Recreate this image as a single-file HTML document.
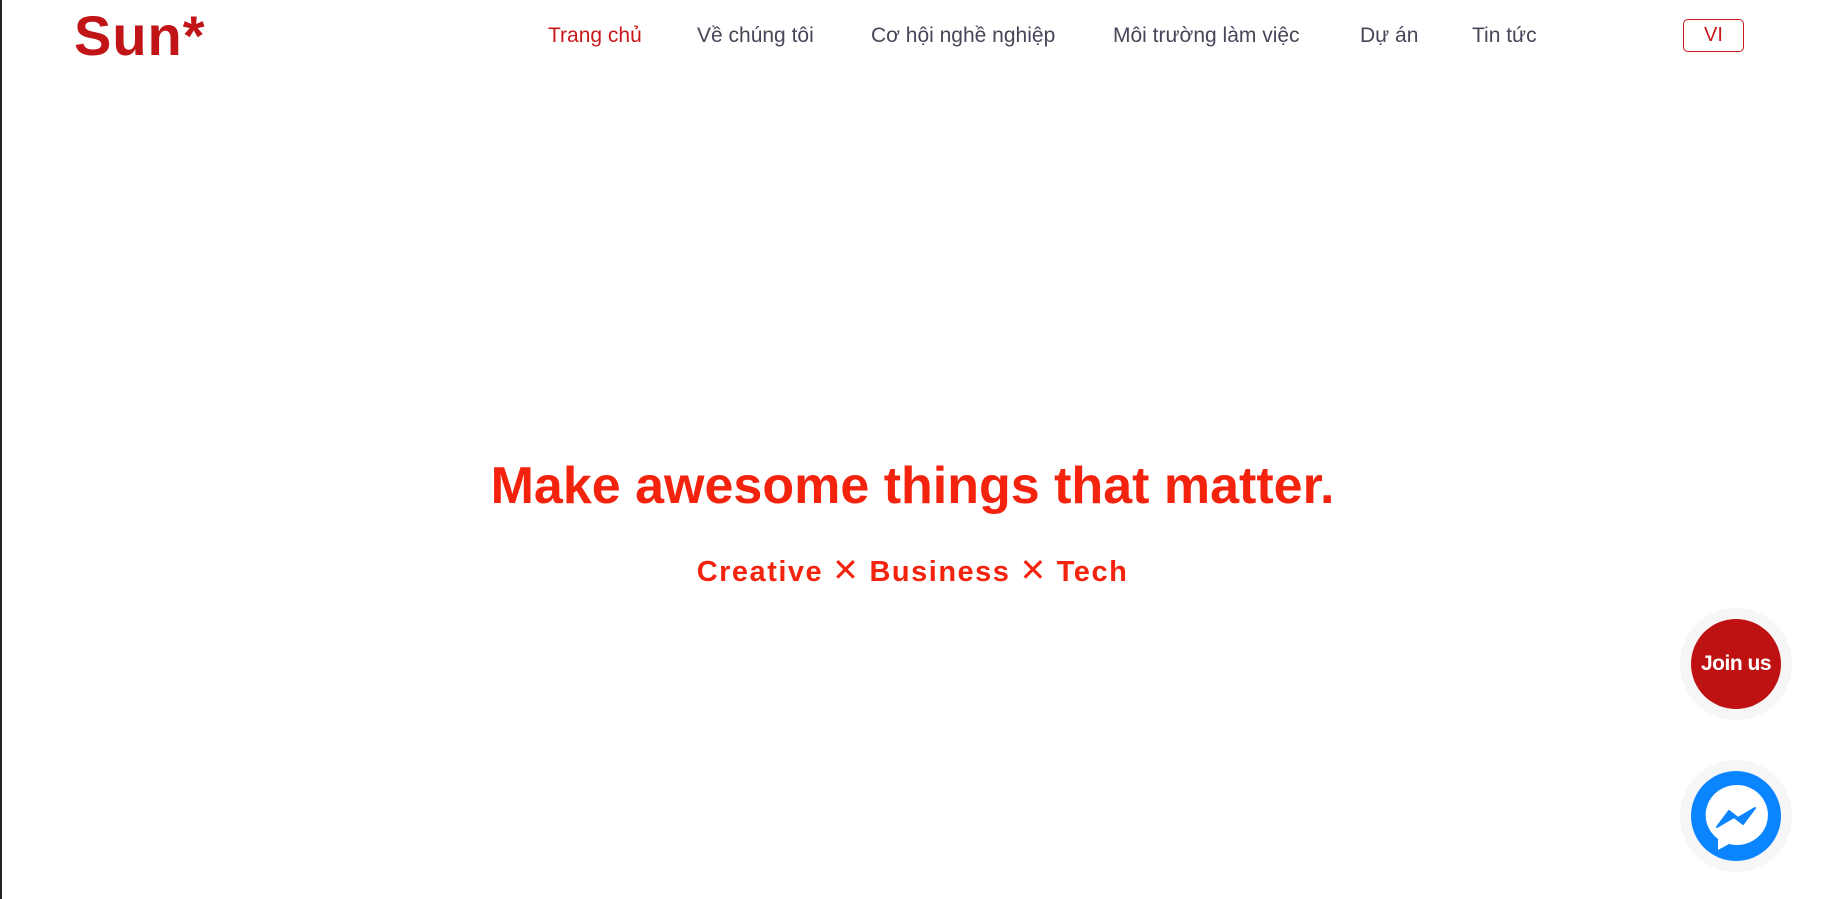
<!DOCTYPE html>
<html><head><meta charset="utf-8"><style>
html,body{margin:0;padding:0;width:1831px;height:899px;overflow:hidden;background:#fff;font-family:"Liberation Sans",sans-serif;}
.lb{position:absolute;left:0;top:0;width:2px;height:899px;background:#222;}
.logo{position:absolute;left:74px;top:6px;font-size:56px;font-weight:bold;color:#c01417;letter-spacing:1px;line-height:60px;}
.nav{position:absolute;top:24px;font-size:21px;color:#4a4458;line-height:24px;white-space:nowrap;}
.vi{position:absolute;left:1683px;top:19px;width:59px;height:31px;border:1.5px solid #c8181c;border-radius:5px;color:#c8181c;font-size:20px;text-align:center;line-height:31px;}
.h1{position:absolute;left:0;width:1825px;top:456px;text-align:center;font-size:52px;font-weight:bold;color:#f4230e;line-height:60px;}
.h2{position:absolute;left:0;width:1825px;top:552px;text-align:center;font-size:29px;font-weight:bold;color:#f4230e;line-height:36px;letter-spacing:1.5px;}
.x{font-weight:normal;font-size:32px;margin:0 9px;}
.halo{position:absolute;width:112px;height:112px;border-radius:50%;background:#f6f6f6;}
.c{position:absolute;left:11px;top:11px;width:90px;height:90px;border-radius:50%;}
</style></head><body>
<div class="lb"></div>
<div class="logo">Sun*</div>
<div class="nav" style="left:548px;color:#c8181c">Trang chủ</div>
<div class="nav" style="left:697px">Về chúng tôi</div>
<div class="nav" style="left:871px">Cơ hội nghề nghiệp</div>
<div class="nav" style="left:1113px">Môi trường làm việc</div>
<div class="nav" style="left:1360px">Dự án</div>
<div class="nav" style="left:1472px">Tin tức</div>
<div class="vi">VI</div>
<div class="h1">Make awesome things that matter.</div>
<div class="h2">Creative<span class="x">✕</span>Business<span class="x">✕</span>Tech</div>
<div class="halo" style="left:1680px;top:608px"><div class="c" style="background:#be1212;color:#fff;font-weight:bold;font-size:21px;text-align:center;line-height:90px;letter-spacing:-0.5px;">Join us</div></div>
<div class="halo" style="left:1680px;top:760px"><div class="c" style="background:#0a84ff;">
<svg width="90" height="90" viewBox="0 0 90 90"><path d="M46 14a31 30 0 1 1 -8 59l-11 6 v-11 a31 30 0 0 1 19 -54z" fill="#fff"/><path d="M26 56l12-16 9 7 17-10-12 16-9-7z" fill="#0a84ff" stroke="#0a84ff" stroke-width="2" stroke-linejoin="round"/></svg></div></div>
</body></html>
